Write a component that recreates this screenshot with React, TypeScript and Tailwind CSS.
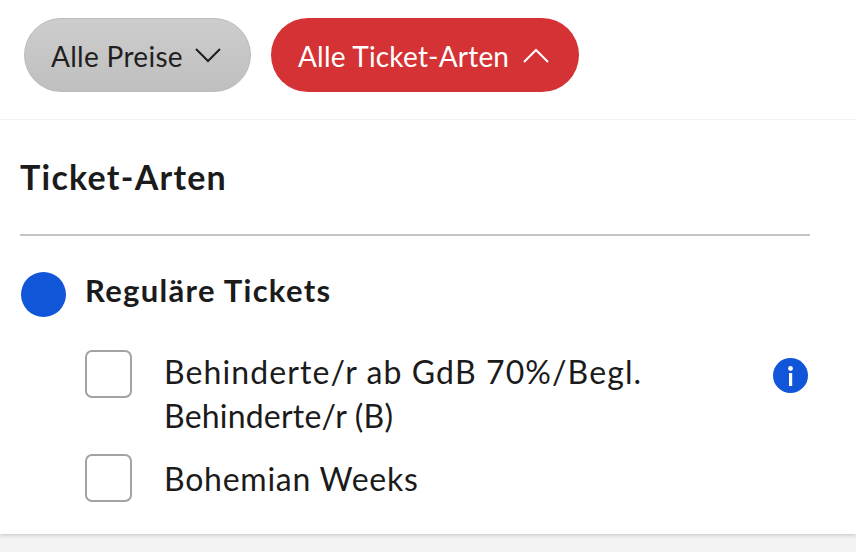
import React from "react";

const font = { fontFamily: "Lato, 'Noto Sans', sans-serif" };

function Chevron({ up, className }: { up?: boolean; className: string }) {
    return (
        <svg viewBox="0 0 26 15" fill="none" stroke="currentColor" strokeWidth="2" className={className}>
            <path d={up ? "M1 14 L13 2 L25 14" : "M1 1 L13 13 L25 1"} />
        </svg>
    );
}

function Check({ label, textClass }: { label: React.ReactNode; textClass?: string }) {
    return (
        <div className="flex items-start">
            <div className="w-[47px] h-[48px] shrink-0 rounded-[7px] border-2 border-[#a3a3a3] bg-white" />
            <div className={`ml-[32px] text-[32px] leading-[44px] text-[#1b1b1b] ${textClass ?? ""}`}>{label}</div>
        </div>
    );
}

export default function App() {
    return (
        <div className="w-[856px] h-[552px] bg-[#f3f3f3] overflow-hidden" style={font}>
            <div className="bg-white h-[534px] shadow-[0_1px_4px_rgba(0,0,0,0.2)]">
                <div className="flex gap-[20px] pl-[24px] pt-[18px] h-[120px] border-b border-[#f2f2f2]">
                    <div className="w-[227px] h-[74px] rounded-full bg-gradient-to-b from-[#cdcdcd] to-[#bfbfbf] border border-[#bbbbbb] flex items-center pl-[26px] text-[#1f1f1f]">
                        <span className="text-[28px] tracking-[0.3px] pt-[1px]">Alle Preise</span>
                        <Chevron className="w-[26px] h-[15px] ml-[12px]" />
                    </div>
                    <div className="w-[308px] h-[74px] rounded-full bg-[#d43235] flex items-center pl-[27px] text-white">
                        <span className="text-[28px] tracking-[0.2px] pt-[1px]">Alle Ticket-Arten</span>
                        <Chevron up className="w-[26px] h-[15px] ml-[14px]" />
                    </div>
                </div>
                <div className="px-[20px]">
                    <div className="w-[790px] h-[116px] border-b-2 border-[#c4c4c4] flex items-center pb-[2px]">
                        <h2 className="text-[34px] font-bold text-[#1b1b1b] tracking-[1.25px]">Ticket-Arten</h2>
                    </div>
                    <div className="flex items-start mt-[35px]">
                        <div className="w-[45px] h-[45px] rounded-full bg-[#1155d9] ml-[1px] mt-[1px]" />
                        <span className="ml-[19px] text-[31px] leading-[40px] font-bold text-[#1b1b1b] tracking-[1.3px] -mt-[1px]">Reguläre Tickets</span>
                    </div>
                    <div className="mt-[33px] pl-[65px] flex flex-col gap-[16px]">
                        <div className="flex items-start justify-between pr-[28px]">
                            <Check
                                label={
                                    <>
                                        <span className="tracking-[1.1px]">Behinderte/r ab GdB 70%/Begl.</span>
                                        <br />
                                        <span className="tracking-[0.2px]">Behinderte/r (B)</span>
                                    </>
                                }
                            />
                            <div className="mt-[8px] w-[35px] h-[35px] shrink-0 rounded-full bg-[#1155d9]">
                                <svg viewBox="0 0 35 35" className="w-[35px] h-[35px]" fill="white">
                                    <circle cx="17.5" cy="10.5" r="2.4" />
                                    <rect x="16" y="15" width="3.2" height="13" />
                                </svg>
                            </div>
                        </div>
                        <Check label="Bohemian Weeks" textClass="pt-[3px] tracking-[0.75px]" />
                    </div>
                </div>
            </div>
        </div>
    );
}
